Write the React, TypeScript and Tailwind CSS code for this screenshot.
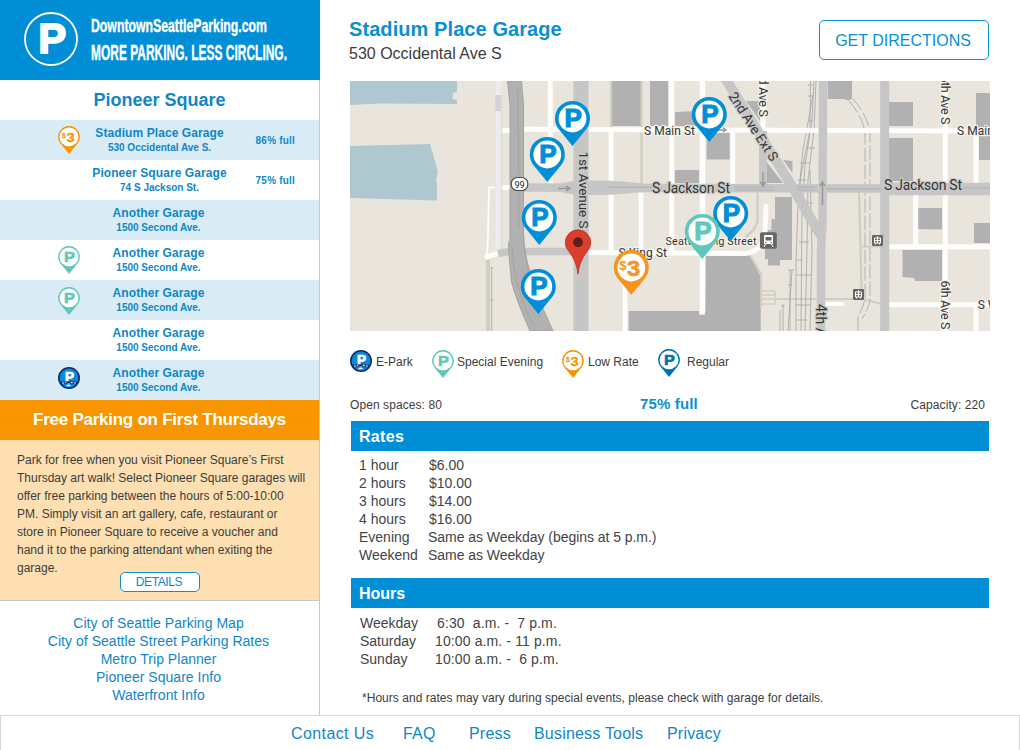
import React from "react";

const FONT = "font-['Liberation_Sans',Arial,sans-serif]";

type Tone = { ring: string; label: "P" | "3" };

const TONES: Record<string, Tone> = {
  regular: { ring: "#008fd7", label: "P" },
  navy: { ring: "#0071b5", label: "P" },
  evening: { ring: "#5fc8bb", label: "P" },
  lowRate: { ring: "#f79420", label: "3" },
  lowRateSmall: { ring: "#f89500", label: "3" },
};

const PIN_FONT = "'Liberation Sans', Arial, sans-serif";

/* Pin drawn in a 35 x 45 box whose tip is at the bottom centre. */
function PinShape({ tone, thin = false }: { tone: Tone; thin?: boolean }) {
  return (
    <g>
      <path d="M3.2 27.5 A17.5 17.5 0 1 1 31.8 27.5 L17.5 45 Z" fill={tone.ring} />
      <circle cx="17.5" cy="17.5" r={thin ? 15.2 : 13.9} fill="#fff" />
      {tone.label === "P" ? (
        <text
          transform="translate(18.1 26.2) scale(1.04 1)"
          textAnchor="middle"
          fontFamily={PIN_FONT}
          fontWeight="700"
          fontSize="25"
          fill={tone.ring}
          stroke={tone.ring}
          strokeWidth="1.100"
        >
          P
        </text>
      ) : (
        <g fill={tone.ring} stroke={tone.ring} fontFamily={PIN_FONT} fontWeight="700">
          <text x="5.800" y="19.600" fontSize="12.500" strokeWidth="0.100">$</text>
          <text transform="translate(13.300 25.500) scale(1.080 1)" fontSize="22" strokeWidth="0.600">3</text>
        </g>
      )}
    </g>
  );
}

function SmallPin({ tone }: { tone: Tone }) {
  return (
    <svg width="22" height="28" viewBox="0 0 35 45" className="block">
      <PinShape tone={tone} thin />
    </svg>
  );
}

function EParkIcon() {
  return (
    <svg width="22" height="22" viewBox="0 0 22 22" className="block">
      <circle cx="11" cy="11" r="10.200" fill="#0a8ade" stroke="#0b2c6b" strokeWidth="1.600" />
      <path d="M2.200 14.800Q11 13.500 19.800 14.800L19 17.200Q11 16.600 3 17.200Z" fill="#0b2c6b" />
      <text x="11.500" y="13.800" textAnchor="middle" fontFamily={PIN_FONT} fontWeight="700" fontSize="13.500" fill="#fff" stroke="#fff" strokeWidth="0.700">P</text>
      <path d="M4 16h2.200M7.200 15.600h1M9.400 17h2.400M12.800 15.600h1.800M15.800 16h2M8.500 18.600h4" stroke="#fff" strokeWidth="1.200" />
    </svg>
  );
}

const MAP_PINS: { x: number; y: number; tone: string }[] = [
  { x: 555, y: 101, tone: "regular" },
  { x: 529.8, y: 137, tone: "regular" },
  { x: 521.8, y: 200, tone: "regular" },
  { x: 520.8, y: 269, tone: "regular" },
  { x: 691.8, y: 97, tone: "regular" },
  { x: 713.2, y: 196, tone: "regular" },
  { x: 684.8, y: 214, tone: "evening" },
  { x: 613.8, y: 250, tone: "lowRate" },
];

function TramIcon({ x, y, s }: { x: number; y: number; s: number }) {
  return (
    <svg x={x} y={y} width={s} height={s} viewBox="0 0 11 11">
      <rect width="11" height="11" rx="1" fill="#666" />
      <path d="M2.5 3h6M5.5 1.3V3M2.5 3v5h6V3M2.5 5.6h6M5.5 3v5M3.5 8v1.4M7.5 8v1.4" stroke="#fff" strokeWidth="1" fill="none" />
    </svg>
  );
}

function GarageMap() {
  return (
    <svg width="640" height="250" viewBox="350 81 640 250" className="block bg-[#e9e5dc]">
      <g fill="#afc7cf">
        <path d="M350 81H457V92L453 93 452.5 99 457 100V104L380 103.5 350 105Z" />
        <path d="M350 146L430 144 437.7 171 436 182 437 183V200.5L350 198Z" />
      </g>

      <g fill="#b1b1b1">
        <path d="M612 81h29v45h-29zM650 81h18v45h-18zM675 112l23-1v15h-23zM675 170h24v13h-24zM706.7 133h23v26.500h-23z" />
        <path d="M746 101h14v20zM765 160l18 23h-18zM783 160l9.500 1v12z" />
        <path d="M628.700 311H699V315H705L705.700 256 750 255 760.700 277V331H628.700Z" />
        <path d="M775 197h17v63h-12v5.500h-12V259h-3v-29h6.500v-11h3.500z" />
        <path d="M827.700 81H852v18l-4 1.500-4-1.500h-16.300zM889 102h24v24h-24zM889 138h24v43h-24zM976 93h14v35h-14zM979 136h11v24h-11zM918 208h24v21.500l-24-.5zM974 223h16v20h-16zM902.500 250H942v31h-27l-1-3-11.500-1z" />
      </g>

      {/* footpaths */}
      <g fill="none" stroke="#cfcebf" strokeWidth="2.200">
        <path d="M488 260V331" strokeWidth="4" />
        <path d="M611 81v47M641.500 81v105M757.500 193v28q-1 8-12 16M750 255l11 19v33" />
        <path d="M859 190l2.500 100M862 246.500h22M776 299h87l20 5.500" />
        <path d="M760 291h15M760 295h16M760 299h16M760 304h15M775 291v13" strokeWidth="1.500" />
      </g>

      {/* rail lines */}
      <g fill="none" stroke="#aaaaaa" strokeWidth="0.900">
        <path d="M491.700 268v63M490 268h3.500M490 300h3.500" />
        <path d="M810.500 81L810 130 801 175 798 205 796 260V331" />
        <path d="M814 81L812 120 805 165 802 210 801 331" />
        <path d="M816 81L814 130 808 180 807 250 805 331" />
        <path d="M813 95L803 150 799 190M810 170L812 250 810 331M790 270V331M792 270L788 331M783 304v27M780 310v21" />
        <path d="M808 85h5M808 96h5M808 121h5M806 148h9M800 163h10M798 180h8M805 203h8M806 222h8M799 242h10M796 260h6M797 275h14M788 285h4M796 305h14M797 320h10M788 270h6M781 306h4" />
      </g>
      <g fill="none" stroke="#b0b2b5" strokeWidth="1" strokeDasharray="14 3">
        <path d="M849 101q14 16 16 32V299q-1 6-7 18v14" />
        <path d="M853 99q15 17 17 34V301q-1 6-8 18" />
      </g>

      {/* minor streets */}
      <g fill="none" stroke="#fdfdfc" strokeWidth="5">
        <path d="M501 130.500H511M524 129.300L990 131M496 187.500h16" />
        <path d="M550.300 81V184M611 130V252M641 193V252M671.700 81V252M732.700 130V184M763 81V130M625 252V331" />
        <path d="M702.500 81V311" strokeWidth="5.500" strokeLinecap="round" />
        <path d="M588 252.500L745 253.500Q763 252 765 232L766 206" strokeLinecap="round" />
        <path d="M945.300 81V331M976 136V184M915.700 195V247M976 305v26M888 246.700H990M888 304.700H990" />
        <path d="M823 304h20" strokeLinecap="round" strokeWidth="4" />
        <path d="M498 187.500H489L488 235 487 256" strokeWidth="1.800" />
        <path d="M487 256.500L498 253.500" strokeLinecap="round" />
      </g>
      <path d="M495.500 81L495.500 250M501.800 95V250" stroke="#d8d5cc" strokeWidth="1" fill="none" />
      <path d="M498 81V252" stroke="#ececee" strokeWidth="5.500" fill="none" />
      <path d="M498 95V111" stroke="#d3d3d5" strokeWidth="5.500" fill="none" />

      {/* arterials */}
      <g fill="none" stroke="#c6c6c6">
        <path d="M581 81V331" strokeWidth="15" />
        <path d="M498 253.500L510 251.500H585" strokeWidth="7.500" />
        <path d="M823 81L822.500 225 821 250V331" strokeWidth="8.500" />
        <path d="M884.700 81V331" strokeWidth="9" />
        <path d="M763 131V184" strokeWidth="8" />
        <path d="M725 78L770 151 790 183 821 236" strokeWidth="10" />
        <path d="M520 187.500L885 188.500" strokeWidth="8.500" />
        <path d="M880 189H990" strokeWidth="12.500" />
      </g>
      <path d="M555 186q10-5 26-5.500h20q34 1 50 4.500v5q-16 4-50 5h-20q-16-.5-26-5z" fill="#c6c6c6" />
      <g stroke="#aeaeae" strokeWidth="1" fill="none">
        <path d="M609 187.200h50M735 187h40M735 190h40M797 187h18M797 190h18M826 189h55M960 188h30" />
        <path d="M558 188.500h12m-4-2.500l4 2.500-4 2.500M763 172v14m-2.500-4l2.500 4 2.500-4M822.500 205V182m-2.500 4l2.500-4 2.500 4M718 130h8m-3-2l3 2-3 2" strokeWidth="1.500" stroke="#999" />
      </g>

      {/* Route 99 */}
      <path d="M507.500 81H521.500L523.500 104V242Q526 262 536 290 543 310 553 331H530Q516 300 511.500 282 509.500 266 508.500 243L510 240V106Z" fill="#b1b1b1" stroke="#9b9b9b" strokeWidth="0.800" />
      <path d="M518 90L519 228M524 236Q524 262 540 318M512 245Q512 282 533 325" stroke="#9d9d9d" strokeWidth="0.700" fill="none" />
      <rect x="511.300" y="177.500" width="16.500" height="13" rx="6" fill="#fff" stroke="#4d4d4d" strokeWidth="1.100" />
      <text x="519.500" y="187.500" textAnchor="middle" fontSize="9" fontFamily="Roboto, sans-serif" fill="#222">99</text>

      <TramIcon x={872} y={235} s={11} />
      <TramIcon x={853} y={289} s={11} />
      <rect x="760" y="232.300" width="16.800" height="16.500" rx="2" fill="#666" />
      <path d="M765 235h7q1 0 1 1v8h-9v-8q0-1 1-1z" fill="#fff" />
      <path d="M765.500 237h6v3.500h-6zM765 242h1.500v1H765zM770.500 242h1.500v1h-1.500z" fill="#666" />
      <path d="M765.500 244l-1.500 3M771.500 244l1.500 3" stroke="#fff" strokeWidth="1" />

      <g fontFamily="Roboto, sans-serif" fill="#333" stroke="#f4f2ed" strokeWidth="2.500" strokeLinejoin="round" paintOrder="stroke">
        <text x="644" y="134.500" fontSize="12" textLength="51">S Main St</text>
        <text x="957" y="134.800" fontSize="12" textLength="51">S Main St</text>
        <text x="618.500" y="256.500" fontSize="12" textLength="48.500">S King St</text>
        <text x="665.500" y="244.500" fontSize="11" textLength="91">Seattle King Street</text>
        <text x="977.700" y="308.500" fontSize="12">S Weller St</text>
        <text transform="translate(941 280.500) rotate(90)" fontSize="12.500" textLength="49">6th Ave S</text>
        <text transform="translate(941 75.500) rotate(90)" fontSize="12.500" textLength="49">6th Ave S</text>
        <text transform="translate(759.200 64) rotate(90)" fontSize="12.500" textLength="53">2nd Ave S</text>
        <g stroke="#c9c9c9">
          <text x="652" y="192.800" fontSize="14" textLength="78">S Jackson St</text>
          <text x="884" y="190.300" fontSize="14" textLength="78">S Jackson St</text>
          <text transform="translate(579 151.500) rotate(90)" fontSize="13.500" textLength="77">1st Avenue S</text>
          <text transform="translate(816 304) rotate(90)" fontSize="14">4th Ave S</text>
          <text transform="translate(728 96) rotate(57)" fontSize="13.500" textLength="79">2nd Ave Ext S</text>
        </g>
      </g>

      {MAP_PINS.map((p) => (
        <g key={`${p.x}-${p.y}`} transform={`translate(${p.x} ${p.y})`}>
          <PinShape tone={TONES[p.tone]} />
        </g>
      ))}

      <path d="M578 274Q577 262 569 251.500A12.700 12.700 0 1 1 587 251.500Q579 262 578 274Z" fill="#db3f2b" stroke="#b52e1f" strokeWidth="0.800" />
      <circle cx="578" cy="242.200" r="4.900" fill="#5f2018" />
    </svg>
  );
}

type Garage = { name: string; address: string; full?: string; icon?: React.ReactNode };

const GARAGES: Garage[] = [
  { name: "Stadium Place Garage", address: "530 Occidental Ave S.", full: "86% full", icon: <SmallPin tone={TONES.lowRateSmall} /> },
  { name: "Pioneer Square Garage", address: "74 S Jackson St.", full: "75% full" },
  { name: "Another Garage", address: "1500 Second Ave." },
  { name: "Another Garage", address: "1500 Second Ave.", icon: <SmallPin tone={TONES.evening} /> },
  { name: "Another Garage", address: "1500 Second Ave.", icon: <span className="pt-px"><SmallPin tone={TONES.evening} /></span> },
  { name: "Another Garage", address: "1500 Second Ave." },
  { name: "Another Garage", address: "1500 Second Ave.", icon: <span className="pt-px"><EParkIcon /></span> },
];

const RATES = [
  ["1 hour", "$6.00"],
  ["2 hours", "$10.00"],
  ["3 hours", "$14.00"],
  ["4 hours", "$16.00"],
  ["Evening", "Same as Weekday (begins at 5 p.m.)"],
  ["Weekend", "Same as Weekday"],
];

const HOURS = [
  ["Weekday", "6:30  a.m. -  7 p.m."],
  ["Saturday", "10:00 a.m. - 11 p.m."],
  ["Sunday", "10:00 a.m. -  6 p.m."],
];

const LINKS = [
  "City of Seattle Parking Map",
  "City of Seattle Street Parking Rates",
  "Metro Trip Planner",
  "Pioneer Square Info",
  "Waterfront Info",
];

const PROMO = [
  "Park for free when you visit Pioneer Square’s First",
  "Thursday art walk! Select Pioneer Square garages will",
  "offer free parking between the hours of 5:00-10:00",
  "PM. Simply visit an art gallery, cafe, restaurant or",
  "store in Pioneer Square to receive a voucher and",
  "hand it to the parking attendant when exiting the",
  "garage.",
];

function Sidebar() {
  return (
    <aside className="flex h-[715px] w-80 shrink-0 flex-col">
      <header className="flex h-20 items-start bg-[#008fd7] pt-3 pl-6">
        <svg width="54" height="54" viewBox="0 0 54 54" className="block shrink-0">
          <circle cx="27" cy="27" r="26" fill="none" stroke="#fff" strokeWidth="1.800" />
          <text x="28.200" y="41.300" textAnchor="middle" fontFamily={PIN_FONT} fontWeight="700" fontSize="42" fill="#fff" stroke="#fff" strokeWidth="1.800">P</text>
        </svg>
        <svg width="240" height="60" viewBox="0 0 240 60" className="block shrink-0">
          <g fontFamily="'Liberation Sans', Arial, sans-serif" fontWeight="700" fill="#fff" stroke="#fff" strokeWidth="0.400">
            <text transform="translate(13 20) scale(0.646 1)" fontSize="19" textLength="272.400">DowntownSeattleParking.com</text>
            <text transform="translate(13 48) scale(0.5417 1)" fontSize="22" textLength="361.800">MORE PARKING. LESS CIRCLING.</text>
          </g>
        </svg>
      </header>
      <div className="flex grow flex-col border-r border-[#c8c8c8]">
        <h2 className="h-10 text-center text-lg leading-[41px] font-bold text-[#0f86c8]">Pioneer Square</h2>
        <ul>
          {GARAGES.map((g, i) => (
            <li key={i} className={`grid h-10 grid-cols-[80px_159px_80px] text-[#0f86c8] ${i % 2 === 0 ? "bg-[#d9ecf6]" : "bg-white"}`}>
              <span className="flex items-start justify-end pt-1.5">{g.icon}</span>
              <span className={`flex flex-col items-center pt-1 font-bold whitespace-nowrap ${g.full ? "" : "pr-[2px]"}`}>
                <span className="text-[12px] leading-[18px] tracking-[0.08px]">{g.name}</span>
                <span className="text-[10px] leading-3">{g.address}</span>
              </span>
              <span className="pr-6 text-right text-[10px] leading-[41px] font-bold tracking-[0.2px]">{g.full}</span>
            </li>
          ))}
        </ul>
        <h3 className="h-10 bg-[#f89500] text-center text-[17px] leading-10 font-bold tracking-[-0.25px] text-white">Free Parking on First Thursdays</h3>
        <section className="flex h-[161px] flex-col border-b border-[#c8c8c8] bg-[#fddfb1] pt-[11px] pl-[17px] text-[12px] leading-[18px] text-[#3c3c3c]">
          {PROMO.map((line) => (
            <p key={line} className="whitespace-nowrap">{line}</p>
          ))}
          <button className="-mt-[5px] ml-[103px] h-5 w-20 shrink-0 rounded-[5px] border border-[#0f8fd2] bg-white pr-[2px] text-[12px] leading-[19px] tracking-[-0.4px] text-[#0f86c8]">DETAILS</button>
        </section>
        <nav className="flex flex-col items-center pt-[13px] pr-[2px] text-[14px] leading-[18px] tracking-[0.03px] text-[#0f86c8]">
          {LINKS.map((l) => (
            <a key={l} className="whitespace-nowrap">{l}</a>
          ))}
        </nav>
      </div>
    </aside>
  );
}

export default function App() {
  return (
    <div className={`flex h-[750px] w-[1020px] flex-col overflow-hidden bg-white ${FONT}`}>
      <div className="flex h-[715px]">
        <Sidebar />
        <main className="flex w-[670px] flex-col pl-[30px]">
          <div className="flex h-[81px] justify-between">
            <div className="-ml-px pt-4">
              <h1 className="text-[20px] leading-[26px] font-bold tracking-[0.08px] text-[#0a8fd6]">Stadium Place Garage</h1>
              <p className="text-[16px] leading-6 text-[#3c3c3c]">530 Occidental Ave S</p>
            </div>
            <button className="mt-5 mr-px h-10 w-[170px] rounded-[5px] border border-[#0a8fd6] pt-px pr-[2px] text-[16px] text-[#0a8fd6]">GET DIRECTIONS</button>
          </div>
          <GarageMap />
          <div className="flex h-[60px] items-start pt-[18px] text-[12px] leading-[27px] text-[#3c3c3c]">
            <span className="mt-px mr-[4px]"><EParkIcon /></span>
            <span className="w-[56px]">E-Park</span>
            <span className="mt-px mr-[3px]"><SmallPin tone={TONES.evening} /></span>
            <span className="w-[105px]">Special Evening</span>
            <span className="mt-px mr-[4px]"><SmallPin tone={TONES.lowRateSmall} /></span>
            <span className="w-[70px]">Low Rate</span>
            <span className="mr-[7px]"><SmallPin tone={TONES.navy} /></span>
            <span>Regular</span>
          </div>
          <div className="flex h-[30px] text-[12px] leading-[28px] tracking-[0.08px] text-[#3c3c3c]">
            <span className="w-[290px]">Open spaces: 80</span>
            <span className="w-[225px] text-[15px] leading-[26px] font-bold tracking-[0.15px] text-[#0a8fd6]">75% full</span>
            <span className="w-[120px] text-right">Capacity: 220</span>
          </div>
          <h2 className="mr-px ml-px h-[30px] bg-[#008fd7] pl-2 text-[16px] leading-8 font-bold tracking-[0.3px] text-white">Rates</h2>
          <dl className="grid h-[127px] grid-cols-[69px_1fr] content-start pt-[5px] pl-[9px] text-[14px] leading-[18px] text-[#444]">
            {RATES.map(([k, v]) => (
              <React.Fragment key={k}>
                <dt>{k}</dt>
                <dd className={v.startsWith("$") ? "pl-px" : "tracking-[-0.05px]"}>{v}</dd>
              </React.Fragment>
            ))}
          </dl>
          <h2 className="mr-px ml-px h-[30px] bg-[#008fd7] pl-2 text-[16px] leading-8 font-bold text-white">Hours</h2>
          <dl className="grid h-[80px] grid-cols-[75px_1fr] content-start pt-[6px] pl-[10px] text-[14px] leading-[18px] text-[#444]">
            {HOURS.map(([k, v]) => (
              <React.Fragment key={k}>
                <dt>{k}</dt>
                <dd className={`tracking-[0.12px] whitespace-pre ${v.startsWith("6") ? "pl-[2px]" : ""}`}>{v}</dd>
              </React.Fragment>
            ))}
          </dl>
          <p className="pl-3 text-[12px] leading-5 tracking-[0.03px] text-[#3c3c3c]">*Hours and rates may vary during special events, please check with garage for details.</p>
        </main>
      </div>
      <footer className="flex h-[35px] w-[1020px] border border-b-0 border-[#d6d6d6] pl-[290px] text-[16px] leading-[35px] tracking-[0.2px] whitespace-nowrap text-[#0f86c8]">
        <a className="w-[112px] tracking-[0.4px]">Contact Us</a>
        <a className="w-[66px]">FAQ</a>
        <a className="w-[65px]">Press</a>
        <a className="w-[133px]">Business Tools</a>
        <a>Privacy</a>
      </footer>
    </div>
  );
}
